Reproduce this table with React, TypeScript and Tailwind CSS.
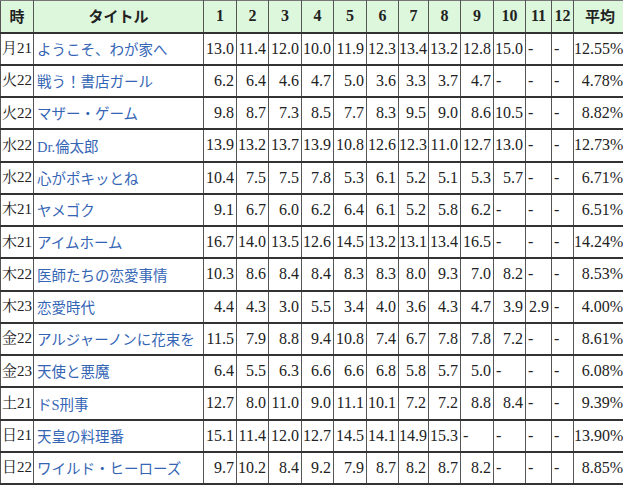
const weeks = ["1", "2", "3", "4", "5", "6", "7", "8", "9", "10", "11", "12"];

const colWidths = [33, 170, 33, 32, 33, 32, 33, 32, 30, 32, 33, 32, 26, 22, 53];

const rows: { day: string; title: string; values: string[]; avg: string }[] = [
  { day: "月21", title: "ようこそ、わが家へ", values: ["13.0", "11.4", "12.0", "10.0", "11.9", "12.3", "13.4", "13.2", "12.8", "15.0", "-", "-"], avg: "12.55%" },
  { day: "火22", title: "戦う！書店ガール", values: ["6.2", "6.4", "4.6", "4.7", "5.0", "3.6", "3.3", "3.7", "4.7", "-", "-", "-"], avg: "4.78%" },
  { day: "火22", title: "マザー・ゲーム", values: ["9.8", "8.7", "7.3", "8.5", "7.7", "8.3", "9.5", "9.0", "8.6", "10.5", "-", "-"], avg: "8.82%" },
  { day: "水22", title: "Dr.倫太郎", values: ["13.9", "13.2", "13.7", "13.9", "10.8", "12.6", "12.3", "11.0", "12.7", "13.0", "-", "-"], avg: "12.73%" },
  { day: "水22", title: "心がポキッとね", values: ["10.4", "7.5", "7.5", "7.8", "5.3", "6.1", "5.2", "5.1", "5.3", "5.7", "-", "-"], avg: "6.71%" },
  { day: "木21", title: "ヤメゴク", values: ["9.1", "6.7", "6.0", "6.2", "6.4", "6.1", "5.2", "5.8", "6.2", "-", "-", "-"], avg: "6.51%" },
  { day: "木21", title: "アイムホーム", values: ["16.7", "14.0", "13.5", "12.6", "14.5", "13.2", "13.1", "13.4", "16.5", "-", "-", "-"], avg: "14.24%" },
  { day: "木22", title: "医師たちの恋愛事情", values: ["10.3", "8.6", "8.4", "8.4", "8.3", "8.3", "8.0", "9.3", "7.0", "8.2", "-", "-"], avg: "8.53%" },
  { day: "木23", title: "恋愛時代", values: ["4.4", "4.3", "3.0", "5.5", "3.4", "4.0", "3.6", "4.3", "4.7", "3.9", "2.9", "-"], avg: "4.00%" },
  { day: "金22", title: "アルジャーノンに花束を", values: ["11.5", "7.9", "8.8", "9.4", "10.8", "7.4", "6.7", "7.8", "7.8", "7.2", "-", "-"], avg: "8.61%" },
  { day: "金23", title: "天使と悪魔", values: ["6.4", "5.5", "6.3", "6.6", "6.6", "6.8", "5.8", "5.7", "5.0", "-", "-", "-"], avg: "6.08%" },
  { day: "土21", title: "ドS刑事", values: ["12.7", "8.0", "11.0", "9.0", "11.1", "10.1", "7.2", "7.2", "8.8", "8.4", "-", "-"], avg: "9.39%" },
  { day: "日21", title: "天皇の料理番", values: ["15.1", "11.4", "12.0", "12.7", "14.5", "14.1", "14.9", "15.3", "-", "-", "-", "-"], avg: "13.90%" },
  { day: "日22", title: "ワイルド・ヒーローズ", values: ["9.7", "10.2", "8.4", "9.2", "7.9", "8.7", "8.2", "8.7", "8.2", "-", "-", "-"], avg: "8.85%" },
];

const cell = "border-x border-x-[#555] border-y-2 border-y-[#333] p-0 align-middle";

export default function App() {
  return (
    <div className="h-[490px] w-[623px] overflow-hidden bg-white font-['Liberation_Serif','Noto_Sans_CJK_JP',serif] text-[#222]">
      <table className="w-[626px] table-fixed border-collapse">
        <colgroup>
          {colWidths.map((w, i) => (
            <col key={i} style={{ width: w }} />
          ))}
        </colgroup>
        <thead>
          <tr className="h-[32px] bg-[#ddf7dd] text-[16px] font-bold">
            <th className={`${cell} border-t border-t-[#777] font-['Noto_Sans_CJK_JP',sans-serif] text-[15px]`}>時</th>
            <th className={`${cell} border-t border-t-[#777] font-['Noto_Sans_CJK_JP',sans-serif] text-[15px]`}>タイトル</th>
            {weeks.map((w) => (
              <th key={w} className={`${cell} border-t border-t-[#777]`}>
                {w}
              </th>
            ))}
            <th className={`${cell} border-t border-t-[#777] font-['Noto_Sans_CJK_JP',sans-serif] text-[15px]`}>平均</th>
          </tr>
        </thead>
        <tbody>
          {rows.map((r, i) => (
            <tr key={i} className="h-[32.25px] text-[16px] leading-none">
              <td className={`${cell} pl-[1px] font-['Liberation_Serif','Noto_Serif_CJK_JP','Noto_Sans_CJK_JP',serif] text-[15px] whitespace-nowrap`}>
                {r.day}
              </td>
              <td className={`${cell} pl-[3px] pt-[3px] text-[14.5px] whitespace-nowrap text-[#3465b5]`}>
                {r.title}
              </td>
              {r.values.map((v, j) => (
                <td
                  key={j}
                  className={`${cell} whitespace-nowrap ${v === "-" ? "pl-[2px] text-left" : "pr-[2px] text-right"}`}
                >
                  {v}
                </td>
              ))}
              <td className={`${cell} pr-[3px] text-right whitespace-nowrap`}>{r.avg}</td>
            </tr>
          ))}
        </tbody>
      </table>
    </div>
  );
}
